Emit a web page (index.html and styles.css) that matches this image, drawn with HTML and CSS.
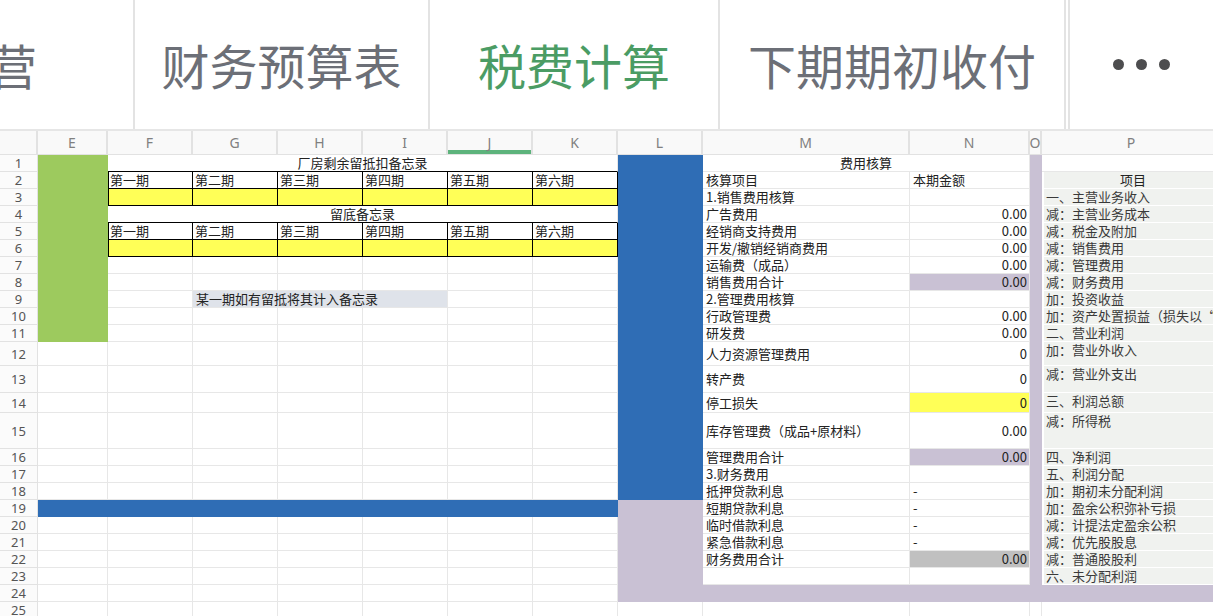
FILE: index.html
```html
<!DOCTYPE html>
<html lang="zh-CN">
<head>
<meta charset="utf-8">
<title>税费计算</title>
<link rel="stylesheet" href="styles.css">
</head>
<body>
<div class="tabs">
  <div class="tab tab-clip"><span>生产经营</span></div>
  <div class="tab tab-2">财务预算表</div>
  <div class="tab tab-3 active">税费计算</div>
  <div class="tab tab-4">下期期初收付</div>
  <div class="tab more"><i class="dot"></i><i class="dot"></i><i class="dot"></i></div>
</div>
<div class="sheet">
  <!-- header -->
  <div class="c h corner"></div>
  <div class="c h">E</div><div class="c h">F</div><div class="c h">G</div><div class="c h">H</div><div class="c h">I</div>
  <div class="c h hsel">J</div><div class="c h">K</div><div class="c h">L</div><div class="c h">M</div><div class="c h">N</div>
  <div class="c h">O</div><div class="c h">P</div>

  <!-- row 1 -->
  <div class="c rn">1</div>
  <div class="c green r11"></div>
  <div class="c tt c6">厂房剩余留抵扣备忘录</div>
  <div class="c blue r18"></div>
  <div class="c ctr c2">费用核算</div>
  <div class="c lav r24"></div>
  <div class="c"></div>

  <!-- row 2 -->
  <div class="c rn">2</div>
  <div class="c bx bl">第一期</div><div class="c bx">第二期</div><div class="c bx">第三期</div><div class="c bx">第四期</div><div class="c bx">第五期</div><div class="c bx">第六期</div>
  <div class="c m">核算项目</div><div class="c n">本期金额</div>
  <div class="c p ph">项目</div>

  <!-- row 3 -->
  <div class="c rn">3</div>
  <div class="c bx bl yel"></div><div class="c bx yel"></div><div class="c bx yel"></div><div class="c bx yel"></div><div class="c bx yel"></div><div class="c bx yel"></div>
  <div class="c m">1.销售费用核算</div><div class="c n"></div>
  <div class="c p">一、主营业务收入</div>

  <!-- row 4 -->
  <div class="c rn">4</div>
  <div class="c tt c6">留底备忘录</div>
  <div class="c m">广告费用</div><div class="c n num">0.00</div>
  <div class="c p">减：主营业务成本</div>

  <!-- row 5 -->
  <div class="c rn">5</div>
  <div class="c bx bl">第一期</div><div class="c bx">第二期</div><div class="c bx">第三期</div><div class="c bx">第四期</div><div class="c bx">第五期</div><div class="c bx">第六期</div>
  <div class="c m">经销商支持费用</div><div class="c n num">0.00</div>
  <div class="c p">减：税金及附加</div>

  <!-- row 6 -->
  <div class="c rn">6</div>
  <div class="c bx bl yel"></div><div class="c bx yel"></div><div class="c bx yel"></div><div class="c bx yel"></div><div class="c bx yel"></div><div class="c bx yel"></div>
  <div class="c m">开发/撤销经销商费用</div><div class="c n num">0.00</div>
  <div class="c p">减：销售费用</div>

  <!-- row 7 -->
  <div class="c rn">7</div>
  <div class="c"></div><div class="c"></div><div class="c"></div><div class="c"></div><div class="c"></div><div class="c"></div>
  <div class="c m">运输费（成品）</div><div class="c n num">0.00</div>
  <div class="c p">减：管理费用</div>

  <!-- row 8 -->
  <div class="c rn">8</div>
  <div class="c"></div><div class="c"></div><div class="c"></div><div class="c"></div><div class="c"></div><div class="c"></div>
  <div class="c m">销售费用合计</div><div class="c n num lavcell">0.00</div>
  <div class="c p">减：财务费用</div>

  <!-- row 9 -->
  <div class="c rn">9</div>
  <div class="c"></div><div class="c note c3">某一期如有留抵将其计入备忘录</div><div class="c"></div><div class="c"></div>
  <div class="c m">2.管理费用核算</div><div class="c n"></div>
  <div class="c p">加：投资收益</div>

  <!-- row 10 -->
  <div class="c rn">10</div>
  <div class="c"></div><div class="c"></div><div class="c"></div><div class="c"></div><div class="c"></div><div class="c"></div>
  <div class="c m">行政管理费</div><div class="c n num">0.00</div>
  <div class="c p">加：资产处置损益（损失以“-”号填列）</div>

  <!-- row 11 -->
  <div class="c rn">11</div>
  <div class="c"></div><div class="c"></div><div class="c"></div><div class="c"></div><div class="c"></div><div class="c"></div>
  <div class="c m">研发费</div><div class="c n num">0.00</div>
  <div class="c p">二、营业利润</div>

  <!-- row 12 -->
  <div class="c rn">12</div>
  <div class="c"></div><div class="c"></div><div class="c"></div><div class="c"></div><div class="c"></div><div class="c"></div><div class="c"></div>
  <div class="c m">人力资源管理费用</div><div class="c n num">0</div>
  <div class="c p">加：营业外收入</div>

  <!-- row 13 -->
  <div class="c rn">13</div>
  <div class="c"></div><div class="c"></div><div class="c"></div><div class="c"></div><div class="c"></div><div class="c"></div><div class="c"></div>
  <div class="c m">转产费</div><div class="c n num">0</div>
  <div class="c p">减：营业外支出</div>

  <!-- row 14 -->
  <div class="c rn">14</div>
  <div class="c"></div><div class="c"></div><div class="c"></div><div class="c"></div><div class="c"></div><div class="c"></div><div class="c"></div>
  <div class="c m">停工损失</div><div class="c n num yel">0</div>
  <div class="c p">三、利润总额</div>

  <!-- row 15 -->
  <div class="c rn">15</div>
  <div class="c"></div><div class="c"></div><div class="c"></div><div class="c"></div><div class="c"></div><div class="c"></div><div class="c"></div>
  <div class="c m">库存管理费（成品+原材料）</div><div class="c n num">0.00</div>
  <div class="c p">减：所得税</div>

  <!-- row 16 -->
  <div class="c rn">16</div>
  <div class="c"></div><div class="c"></div><div class="c"></div><div class="c"></div><div class="c"></div><div class="c"></div><div class="c"></div>
  <div class="c m">管理费用合计</div><div class="c n num lavcell">0.00</div>
  <div class="c p">四、净利润</div>

  <!-- row 17 -->
  <div class="c rn">17</div>
  <div class="c"></div><div class="c"></div><div class="c"></div><div class="c"></div><div class="c"></div><div class="c"></div><div class="c"></div>
  <div class="c m">3.财务费用</div><div class="c n"></div>
  <div class="c p">五、利润分配</div>

  <!-- row 18 -->
  <div class="c rn">18</div>
  <div class="c"></div><div class="c"></div><div class="c"></div><div class="c"></div><div class="c"></div><div class="c"></div><div class="c"></div>
  <div class="c m">抵押贷款利息</div><div class="c n">-</div>
  <div class="c p">加：期初未分配利润</div>

  <!-- row 19 -->
  <div class="c rn">19</div>
  <div class="c blue c7"></div>
  <div class="c lav r6"></div>
  <div class="c m">短期贷款利息</div><div class="c n">-</div>
  <div class="c p">加：盈余公积弥补亏损</div>

  <!-- row 20 -->
  <div class="c rn">20</div>
  <div class="c"></div><div class="c"></div><div class="c"></div><div class="c"></div><div class="c"></div><div class="c"></div><div class="c"></div>
  <div class="c m">临时借款利息</div><div class="c n">-</div>
  <div class="c p">减：计提法定盈余公积</div>

  <!-- row 21 -->
  <div class="c rn">21</div>
  <div class="c"></div><div class="c"></div><div class="c"></div><div class="c"></div><div class="c"></div><div class="c"></div><div class="c"></div>
  <div class="c m">紧急借款利息</div><div class="c n">-</div>
  <div class="c p">减：优先股股息</div>

  <!-- row 22 -->
  <div class="c rn">22</div>
  <div class="c"></div><div class="c"></div><div class="c"></div><div class="c"></div><div class="c"></div><div class="c"></div><div class="c"></div>
  <div class="c m">财务费用合计</div><div class="c n num gry">0.00</div>
  <div class="c p">减：普通股股利</div>

  <!-- row 23 -->
  <div class="c rn">23</div>
  <div class="c"></div><div class="c"></div><div class="c"></div><div class="c"></div><div class="c"></div><div class="c"></div><div class="c"></div>
  <div class="c m"></div><div class="c n"></div>
  <div class="c p">六、未分配利润</div>

  <!-- row 24 -->
  <div class="c rn">24</div>
  <div class="c"></div><div class="c"></div><div class="c"></div><div class="c"></div><div class="c"></div><div class="c"></div><div class="c"></div>
  <div class="c lav c2"></div>
  <div class="c lav"></div>

  <!-- row 25 -->
  <div class="c rn">25</div>
  <div class="c"></div><div class="c"></div><div class="c"></div><div class="c"></div><div class="c"></div><div class="c"></div><div class="c"></div>
  <div class="c"></div><div class="c"></div><div class="c"></div><div class="c"></div><div class="c"></div>
</div>
</body>
</html>
```

FILE: styles.css
```css
* { box-sizing: border-box; }
html, body { margin: 0; padding: 0; background: #fff; }
body {
  width: 1213px;
  height: 616px;
  overflow: hidden;
  font-family: "Noto Sans CJK SC", "Noto Sans", sans-serif;
}

/* ---------- sheet tabs ---------- */
.tabs {
  display: flex;
  height: 131px;
  border-bottom: 2px solid #e6e6e6;
  overflow: hidden;
}
.tab {
  flex: none;
  display: flex;
  align-items: center;
  justify-content: center;
  border-right: 2px solid #e3e3e3;
  font-size: 48px;
  line-height: 1.2;
  color: #6c6f77;
  white-space: nowrap;
}
.tab-clip {
  width: 135px;
  justify-content: flex-end;
  padding-right: 96px;
  overflow: hidden;
}
.tab-clip span { flex: none; }
.tab-2 { width: 295px; }
.tab-3 { width: 290px; }
.tab-4 { width: 346px; }
.tab.active { color: #4b9c64; }
.more {
  flex: 1;
  margin-left: 2px;
  border-right: none;
  border-left: 2px solid #e3e3e3;
  gap: 12px;
}
.dot {
  width: 11px;
  height: 11px;
  border-radius: 50%;
  background: #4d4d4f;
}

/* ---------- grid ---------- */
.sheet {
  display: grid;
  grid-template-columns: 38px 70px repeat(7, 85px) 207px 120px 12px 180px;
  grid-template-rows: 24px repeat(11, 17px) 24px 27px 20px 36px repeat(10, 17px);
  font-size: 13px;
  color: #222;
}
.c {
  display: flex;
  align-items: center;
  min-width: 0;
  padding: 0 2px;
  border-right: 1px solid #e7e7e7;
  border-bottom: 1px solid #e7e7e7;
  white-space: nowrap;
  line-height: 16px;
}
.h {
  justify-content: center;
  background: #f9f9f9;
  color: #808080;
  font-family: "Noto Sans", sans-serif;
  font-size: 14px;
  border-color: #e2e2e2;
  border-right-width: 2px;
}
.hsel { box-shadow: inset 0 -4px 0 #5db37c; }
.rn {
  justify-content: center;
  background: #fbfbfb;
  color: #555;
  font-family: "Noto Sans", sans-serif;
  font-size: 13px;
  border-color: #e2e2e2;
}

/* spans */
.r6 { grid-row: span 6; }
.r11 { grid-row: span 11; }
.r18 { grid-row: span 18; }
.r24 { grid-row: span 24; }
.c2 { grid-column: span 2; }
.c3 { grid-column: span 3; }
.c6 { grid-column: span 6; }
.c7 { grid-column: span 7; }

/* fills */
.green { background: #9dca5e; border-color: #9dca5e; }
.blue { background: #2f6db5; border-color: #2f6db5; }
.lav { background: #c9c1d4; border-color: #c9c1d4; }
.lavcell { background: #c9c1d4; }
.yel { background: #ffff57; }
.gry { background: #c0c0c0; }
.note { background: #dfe3ea; padding-left: 3px; }

/* boxed period tables */
.bx { border-right-color: #000; border-bottom-color: #000; }
.bl { box-shadow: inset 1px 0 0 #000; }
.tt { justify-content: center; border-bottom-color: #000; }
.ctr { justify-content: center; }

/* expense table */
.m { padding-left: 3px; }
.n { padding-left: 3px; padding-right: 2px; }
.num { justify-content: flex-end; }

/* profit statement column */
.p {
  align-items: flex-start;
  background: #f0f2ef;
  color: #3a3a3a;
  border-left: 2px solid #fff;
  border-bottom-color: #fff;
  border-right: none;
}
.ph { justify-content: center; color: #222; }
```
